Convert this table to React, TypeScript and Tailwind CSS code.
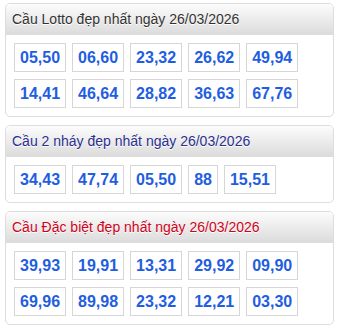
import React from "react";

const sections = [
  {
    id: 1,
    title: "Cầu Lotto đẹp nhất ngày 26/03/2026",
    color: "text-[#333333]",
    rows: [
      ["05,50", "06,60", "23,32", "26,62", "49,94"],
      ["14,41", "46,64", "28,82", "36,63", "67,76"],
    ],
  },
  {
    id: 2,
    title: "Cầu 2 nháy đẹp nhất ngày 26/03/2026",
    color: "text-[#2b2f8f]",
    rows: [["34,43", "47,74", "05,50", "88", "15,51"]],
  },
  {
    id: 3,
    title: "Cầu Đặc biệt đẹp nhất ngày 26/03/2026",
    color: "text-[#d0021b]",
    rows: [
      ["39,93", "19,91", "13,31", "29,92", "09,90"],
      ["69,96", "89,98", "23,32", "12,21", "03,30"],
    ],
  },
];

const App = () => {
  return (
    <div className="w-[339px] bg-white pt-[3px] px-[5px] flex flex-col gap-[8px] font-['Liberation_Sans',Arial,sans-serif]">
      {sections.map((s) => (
        <div key={s.id} className="border border-[#dddddd] rounded-[5px] overflow-hidden bg-white">
          {/* Header */}
          <div className={`h-[31px] px-[6px] flex items-center bg-gradient-to-b from-[#fcfcfc] to-[#dcdcdc] border-b border-[#dddddd] text-[14px] ${s.color} [text-shadow:0_1px_0_#fff]`}>
            {s.title}
          </div>

          {/* Numbers */}
          <div className="px-[8px] pt-[8px] pb-[8px] flex flex-col gap-[7px]">
            {s.rows.map((row, i) => (
              <div key={i} className="flex gap-[6px]">
                {row.map((n, j) => (
                  <span
                    key={j}
                    className="border border-[#d6d6d6] px-[5px] py-[5px] leading-[17px] text-[16px] font-bold text-[#1f5ee0]"
                  >
                    {n}
                  </span>
                ))}
              </div>
            ))}
          </div>
        </div>
      ))}
    </div>
  );
};

export default App;
